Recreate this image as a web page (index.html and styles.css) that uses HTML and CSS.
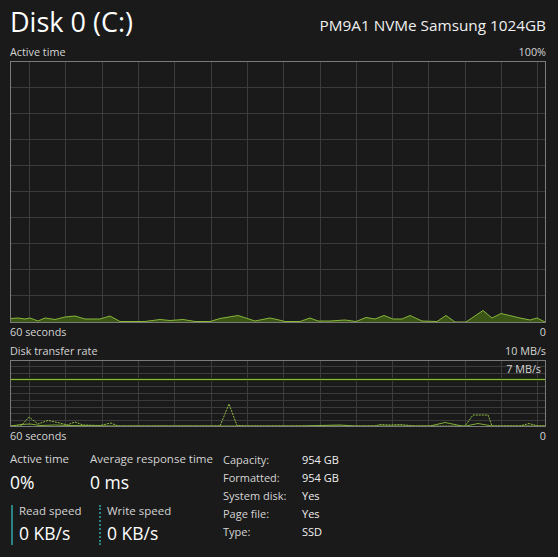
FILE: index.html
```html
<!DOCTYPE html>
<html lang="en">
<head>
    <meta charset="UTF-8">
    <meta name="viewport" content="width=device-width, initial-scale=1.0">
    <title>Disk 0 (C:)</title>
    <link rel="stylesheet" href="styles.css">
</head>
<body>
<div class="panel">
    <!-- 제목 영역 -->
    <div class="head">
        <h1 class="title">Disk 0 (C:)</h1>
        <span class="model">PM9A1 NVMe Samsung 1024GB</span>
    </div>

    <!-- 활성 시간 그래프 -->
    <div class="axis axis-top"><span>Active time</span><span>100%</span></div>
    <svg class="graph graph-big" width="536" height="262" viewBox="10 61 536 262">
        <g class="grid">
            <line x1="29.5" y1="61" x2="29.5" y2="323"/>
            <line x1="65.5" y1="61" x2="65.5" y2="323"/>
            <line x1="102.5" y1="61" x2="102.5" y2="323"/>
            <line x1="138.5" y1="61" x2="138.5" y2="323"/>
            <line x1="174.5" y1="61" x2="174.5" y2="323"/>
            <line x1="211.5" y1="61" x2="211.5" y2="323"/>
            <line x1="247.5" y1="61" x2="247.5" y2="323"/>
            <line x1="283.5" y1="61" x2="283.5" y2="323"/>
            <line x1="320.5" y1="61" x2="320.5" y2="323"/>
            <line x1="356.5" y1="61" x2="356.5" y2="323"/>
            <line x1="392.5" y1="61" x2="392.5" y2="323"/>
            <line x1="428.5" y1="61" x2="428.5" y2="323"/>
            <line x1="465.5" y1="61" x2="465.5" y2="323"/>
            <line x1="501.5" y1="61" x2="501.5" y2="323"/>
            <line x1="537.5" y1="61" x2="537.5" y2="323"/>
            <line x1="10" y1="87.5" x2="546" y2="87.5"/>
            <line x1="10" y1="113.5" x2="546" y2="113.5"/>
            <line x1="10" y1="139.5" x2="546" y2="139.5"/>
            <line x1="10" y1="165.5" x2="546" y2="165.5"/>
            <line x1="10" y1="191.5" x2="546" y2="191.5"/>
            <line x1="10" y1="217.5" x2="546" y2="217.5"/>
            <line x1="10" y1="243.5" x2="546" y2="243.5"/>
            <line x1="10" y1="269.5" x2="546" y2="269.5"/>
            <line x1="10" y1="295.5" x2="546" y2="295.5"/>
        </g>
        <polygon class="area" points="11,322 11,318.5 18,318 25,319 30,318 38,321 45,318 55,319.5 65,317 75,316 85,319 100,319 110,316 120,321.5 145,321.5 160,319.5 170,320.5 183,319.5 195,321.5 210,321.5 220,318.5 238,315.5 255,321 270,318 279,320 285,321.5 300,321.5 310,318 318,321 330,321 345,320 356,321.5 366,317.5 375,319 384,315.5 393,319 402,319 410,315.5 422,321 437,321.5 446,315.5 455,322 466,322 483,310.5 492,318 501,313.5 520,318 530,320 537,318 545,322"/>
        <polyline class="line" points="11,318.5 18,318 25,319 30,318 38,321 45,318 55,319.5 65,317 75,316 85,319 100,319 110,316 120,321.5 145,321.5 160,319.5 170,320.5 183,319.5 195,321.5 210,321.5 220,318.5 238,315.5 255,321 270,318 279,320 285,321.5 300,321.5 310,318 318,321 330,321 345,320 356,321.5 366,317.5 375,319 384,315.5 393,319 402,319 410,315.5 422,321 437,321.5 446,315.5 455,322 466,322 483,310.5 492,318 501,313.5 520,318 530,320 537,318 545,322"/>
        <rect class="frame" x="10.5" y="61.5" width="535" height="261"/>
    </svg>
    <div class="axis axis-under"><span>60 seconds</span><span>0</span></div>

    <!-- 전송 속도 그래프 -->
    <div class="axis axis-gap"><span>Disk transfer rate</span><span>10 MB/s</span></div>
    <div class="graph-wrap">
        <svg class="graph graph-small" width="536" height="67" viewBox="10 360 536 67">
            <g class="grid">
                <line x1="29.5" y1="360" x2="29.5" y2="427"/>
                <line x1="65.5" y1="360" x2="65.5" y2="427"/>
                <line x1="102.5" y1="360" x2="102.5" y2="427"/>
                <line x1="138.5" y1="360" x2="138.5" y2="427"/>
                <line x1="174.5" y1="360" x2="174.5" y2="427"/>
                <line x1="211.5" y1="360" x2="211.5" y2="427"/>
                <line x1="247.5" y1="360" x2="247.5" y2="427"/>
                <line x1="283.5" y1="360" x2="283.5" y2="427"/>
                <line x1="320.5" y1="360" x2="320.5" y2="427"/>
                <line x1="356.5" y1="360" x2="356.5" y2="427"/>
                <line x1="392.5" y1="360" x2="392.5" y2="427"/>
                <line x1="428.5" y1="360" x2="428.5" y2="427"/>
                <line x1="465.5" y1="360" x2="465.5" y2="427"/>
                <line x1="501.5" y1="360" x2="501.5" y2="427"/>
                <line x1="537.5" y1="360" x2="537.5" y2="427"/>
                <line x1="10" y1="366.5" x2="546" y2="366.5"/>
                <line x1="10" y1="373.5" x2="546" y2="373.5"/>
                <line x1="10" y1="386.5" x2="546" y2="386.5"/>
                <line x1="10" y1="393.5" x2="546" y2="393.5"/>
                <line x1="10" y1="400.5" x2="546" y2="400.5"/>
                <line x1="10" y1="407.5" x2="546" y2="407.5"/>
                <line x1="10" y1="413.5" x2="546" y2="413.5"/>
                <line x1="10" y1="420.5" x2="546" y2="420.5"/>
            </g>
            <rect class="limit-band" x="10" y="378" width="536" height="3"/>
            <line class="limit" x1="10" y1="379.5" x2="546" y2="379.5"/>
            <polyline class="read" points="11,426 21,424.5 30,424 40,425.5 55,425 70,425.5 118,426 300,426 320,425.5 340,425 355,426 430,426 445,422.5 462,426 466,426 478,423.5 492,426 545,426"/>
            <polyline class="write" points="11,426 21,426 29,417 38,424 48,420.5 60,423 67,425 75,422 83,425 100,425.5 111,423 118,426 220,426 229,404 237,425.5 245,426 375,426 380,424.5 390,425 400,424.5 415,426 465,426 473,415 488,415 492,426 520,426 529,423.5 538,426 545,426"/>
            <rect class="frame" x="10.5" y="360.5" width="535" height="66"/>
        </svg>
        <span class="scale-mark">7 MB/s</span>
    </div>
    <div class="axis axis-under"><span>60 seconds</span><span>0</span></div>

    <!-- 하단 수치 영역 -->
    <div class="stats">
        <div class="live">
            <div class="stat-row">
                <div class="stat stat-active">
                    <p class="stat-label">Active time</p>
                    <p class="stat-value">0%</p>
                </div>
                <div class="stat">
                    <p class="stat-label">Average response time</p>
                    <p class="stat-value">0 ms</p>
                </div>
            </div>
            <div class="stat-row speed-row">
                <div class="speed speed-read">
                    <p class="speed-label">Read speed</p>
                    <p class="stat-value">0 KB/s</p>
                </div>
                <div class="speed speed-write">
                    <p class="speed-label">Write speed</p>
                    <p class="stat-value">0 KB/s</p>
                </div>
            </div>
        </div>
        <dl class="info">
            <dt>Capacity:</dt><dd>954 GB</dd>
            <dt>Formatted:</dt><dd>954 GB</dd>
            <dt>System disk:</dt><dd>Yes</dd>
            <dt>Page file:</dt><dd>Yes</dd>
            <dt>Type:</dt><dd>SSD</dd>
        </dl>
    </div>
</div>
</body>
</html>
```

FILE: styles.css
```css
body {
    margin: 0;
    background-color: #1a1a1a;
    color: #fff;
    font-family: "Open Sans", "Noto Sans", sans-serif;
}
p, h1, dl, dd {
    margin: 0;
}
.panel {
    width: 536px;
    height: 557px;
    padding: 0 12px 0 10px;
    overflow: hidden;
}
/* 제목 */
.head {
    display: flex;
    justify-content: space-between;
    align-items: baseline;
    padding-top: 2px;
}
.title {
    font-size: 27px;
    font-weight: normal;
    line-height: 40px;
    color: #fff;
}
.model {
    font-size: 15.3px;
    color: #f0f0f0;
    position: relative;
    top: -1px;
}
/* 그래프 라벨 */
.axis {
    display: flex;
    justify-content: space-between;
    font-size: 10.8px;
    line-height: 14px;
    color: #d4d4d4;
}
.axis-top {
    margin-top: 3px;
    margin-bottom: 2px;
}
.axis-under {
    margin-top: 2px;
}
.axis-gap {
    margin-top: 5px;
    margin-bottom: 2px;
}
.graph {
    display: block;
}
.grid line {
    stroke: #3b3b3b;
    stroke-width: 1;
}
.frame {
    fill: none;
    stroke: #7b7b7b;
    stroke-width: 1;
}
.area {
    fill: #3a5516;
}
.line {
    fill: none;
    stroke: #86b53a;
    stroke-width: 1;
}
.limit-band {
    fill: #24330f;
}
.limit {
    stroke: #8ab93c;
    stroke-width: 1;
}
.read {
    fill: none;
    stroke: #7fae35;
    stroke-width: 1;
}
.write {
    fill: none;
    stroke: #94c044;
    stroke-width: 1;
    stroke-dasharray: 2 1;
}
.graph-wrap {
    position: relative;
}
/* 7 MB/s 표시 */
.scale-mark {
    position: absolute;
    top: 2px;
    right: 5px;
    font-size: 10.8px;
    line-height: 14px;
    color: #d4d4d4;
}
/* 하단 수치 */
.stats {
    display: flex;
    margin-top: 8px;
}
.live {
    width: 213px;
}
.stat-row {
    display: flex;
}
.stat-active {
    width: 80px;
}
.stat-label {
    font-size: 11.5px;
    line-height: 16px;
    color: #d4d4d4;
}
.stat-value {
    font-size: 17.5px;
    line-height: 24px;
    margin-top: 3px;
    color: #fff;
}
.speed-row {
    margin-top: 11px;
}
.speed {
    padding-left: 6px;
    height: 40px;
}
.speed-read {
    margin-left: 1px;
    width: 80px;
    border-left: 2px solid #2b8383;
}
.speed-write {
    border-left: 2px dotted #2b8383;
}
.speed-label {
    font-size: 11.5px;
    line-height: 12px;
    color: #d4d4d4;
}
.speed .stat-value {
    margin-top: 4px;
}
.info {
    display: grid;
    grid-template-columns: 79px auto;
    grid-auto-rows: 18px;
    font-size: 11px;
    line-height: 18px;
}
.info dt {
    color: #d4d4d4;
}
.info dd {
    color: #f0f0f0;
}
```
